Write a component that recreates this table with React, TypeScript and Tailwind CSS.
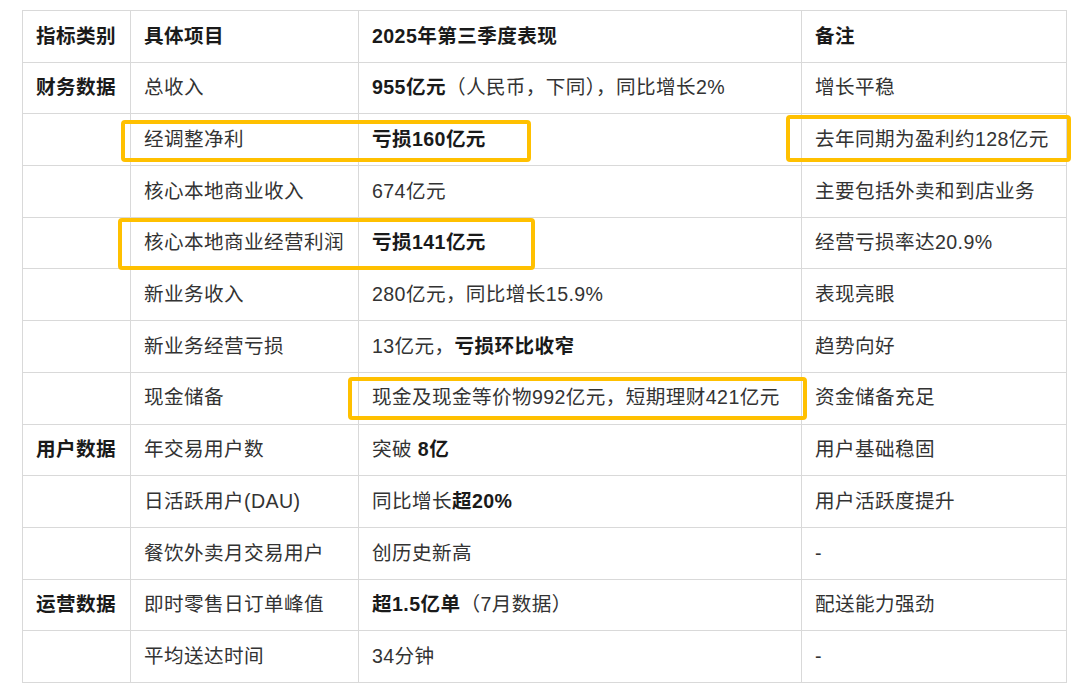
import React from 'react';

type Row = {
  cat?: string;
  item: string;
  value: React.ReactNode;
  note: string;
};

const rows: Row[] = [
  { cat: '财务数据', item: '总收入', value: <><b>955亿元</b>（人民币，下同），同比增长2%</>, note: '增长平稳' },
  { item: '经调整净利', value: <b>亏损160亿元</b>, note: '去年同期为盈利约128亿元' },
  { item: '核心本地商业收入', value: '674亿元', note: '主要包括外卖和到店业务' },
  { item: '核心本地商业经营利润', value: <b>亏损141亿元</b>, note: '经营亏损率达20.9%' },
  { item: '新业务收入', value: '280亿元，同比增长15.9%', note: '表现亮眼' },
  { item: '新业务经营亏损', value: <>13亿元，<b>亏损环比收窄</b></>, note: '趋势向好' },
  { item: '现金储备', value: '现金及现金等价物992亿元，短期理财421亿元', note: '资金储备充足' },
  { cat: '用户数据', item: '年交易用户数', value: <>突破 <b>8亿</b></>, note: '用户基础稳固' },
  { item: '日活跃用户(DAU)', value: <>同比增长<b>超20%</b></>, note: '用户活跃度提升' },
  { item: '餐饮外卖月交易用户', value: '创历史新高', note: '-' },
  { cat: '运营数据', item: '即时零售日订单峰值', value: <><b>超1.5亿单</b>（7月数据）</>, note: '配送能力强劲' },
  { item: '平均送达时间', value: '34分钟', note: '-' },
];

// 黄色高亮框（覆盖在表格上）
function Mark({ className }: { className: string }) {
  return (
    <div
      className={`pointer-events-none absolute rounded-[4px] border-4 border-[#ffc000] ${className}`}
    />
  );
}

export default function App() {
  const cell = 'border border-[#d9d9d9] px-[13px] align-middle whitespace-nowrap overflow-hidden';
  return (
    <div
      className="relative h-[697px] w-[1080px] bg-white pl-[22px] pt-[10px] text-[19.6px] tracking-[0.4px] text-[#333333]"
      style={{ fontFamily: '"Liberation Sans", "Noto Sans CJK SC", sans-serif' }}
    >
      <table className="w-[1044px] table-fixed border-collapse">
        <colgroup>
          <col className="w-[108px]" />
          <col className="w-[228px]" />
          <col className="w-[443px]" />
          <col className="w-[265px]" />
        </colgroup>
        <thead>
          <tr className="h-[51.7px] text-[#1a1a1a]">
            <th className={`${cell} text-left font-bold`}>指标类别</th>
            <th className={`${cell} text-left font-bold`}>具体项目</th>
            <th className={`${cell} text-left font-bold`}>2025年第三季度表现</th>
            <th className={`${cell} text-left font-bold`}>备注</th>
          </tr>
        </thead>
        <tbody>
          {rows.map((r, i) => (
            <tr key={i} className="h-[51.7px]">
              <td className={`${cell} font-bold text-[#1a1a1a]`}>{r.cat ?? ''}</td>
              <td className={cell}>{r.item}</td>
              <td className={`${cell} [&_b]:font-bold [&_b]:text-[#1a1a1a]`}>{r.value}</td>
              <td className={cell}>{r.note}</td>
            </tr>
          ))}
        </tbody>
      </table>

      <Mark className="left-[121px] top-[120px] h-[42px] w-[410px]" />
      <Mark className="left-[786px] top-[115px] h-[47px] w-[285px]" />
      <Mark className="left-[118px] top-[218px] h-[52px] w-[417px]" />
      <Mark className="left-[348px] top-[377px] h-[43px] w-[459px]" />
    </div>
  );
}
